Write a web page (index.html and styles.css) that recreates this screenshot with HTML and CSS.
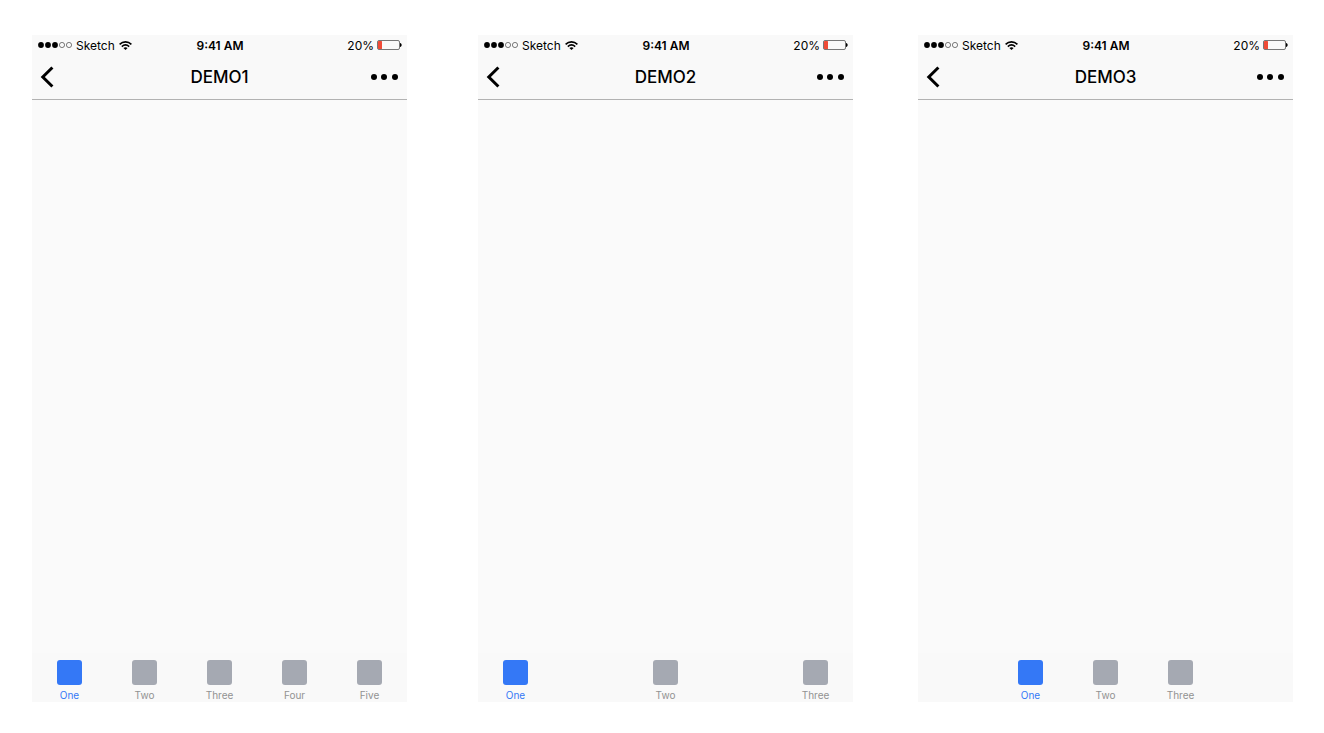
FILE: index.html
```html
<!DOCTYPE html>
<html lang="en">
<head>
  <meta charset="UTF-8" />
  <meta name="viewport" content="width=device-width, initial-scale=1.0">
  <title>Tab bar demos</title>
  <link rel="stylesheet" href="styles.css">
</head>
<body>
  <!-- shared icons -->
  <svg class="sprite" aria-hidden="true">
    <symbol id="signal" viewBox="0 0 34 6">
      <circle cx="3" cy="3" r="2.9" />
      <circle cx="10" cy="3" r="2.9" />
      <circle cx="17" cy="3" r="2.9" />
      <circle cx="24" cy="3" r="2.6" fill="none" stroke="#000" stroke-width=".5" />
      <circle cx="31" cy="3" r="2.6" fill="none" stroke="#000" stroke-width=".5" />
    </symbol>
    <symbol id="wifi" viewBox="0 0 13 9">
      <g fill="none" stroke="#000" stroke-width="1.6">
        <path d="M.6 3.3C4 .1 9 .1 12.4 3.3" />
        <path d="M2.8 5.6C5 3.6 8 3.6 10.2 5.6" />
      </g>
      <path d="M4.4 7.1C5.7 6 7.3 6 8.6 7.1L6.5 9z" />
    </symbol>
    <symbol id="battery" viewBox="0 0 25 10">
      <rect x=".5" y=".5" width="22" height="9" rx="1.5" fill="none" stroke="#555" stroke-width=".8" />
      <rect x="1" y="1" width="4" height="8" rx=".5" fill="#f04b37" />
      <path d="M23 3c2.2.4 2.2 3.6 0 4z" />
    </symbol>
    <symbol id="back" viewBox="0 0 14 22">
      <path d="M12.4 1.5L2.8 11L12.4 20.5" fill="none" stroke="#000" stroke-width="3" />
    </symbol>
    <symbol id="more" viewBox="0 0 28 6">
      <circle cx="3" cy="3" r="3" />
      <circle cx="13" cy="3" r="3" />
      <circle cx="24" cy="3" r="3" />
    </symbol>
  </svg>

  <main class="demos">
    <section class="phone">
      <header>
        <div class="status-bar">
          <div class="carrier">
            <svg class="signal"><use href="#signal" /></svg>
            <span>Sketch</span>
            <svg class="wifi"><use href="#wifi" /></svg>
          </div>
          <div class="time">9:41 AM</div>
          <div class="power">
            <span>20%</span>
            <svg class="battery"><use href="#battery" /></svg>
          </div>
        </div>
        <div class="nav-bar">
          <button class="back" aria-label="Back"><svg><use href="#back" /></svg></button>
          <h1>DEMO1</h1>
          <button class="more" aria-label="More"><svg><use href="#more" /></svg></button>
        </div>
      </header>
      <div class="content"></div>
      <nav class="tab-bar">
        <button class="tab active">One</button>
        <button class="tab">Two</button>
        <button class="tab">Three</button>
        <button class="tab">Four</button>
        <button class="tab">Five</button>
      </nav>
    </section>

    <section class="phone">
      <header>
        <div class="status-bar">
          <div class="carrier">
            <svg class="signal"><use href="#signal" /></svg>
            <span>Sketch</span>
            <svg class="wifi"><use href="#wifi" /></svg>
          </div>
          <div class="time">9:41 AM</div>
          <div class="power">
            <span>20%</span>
            <svg class="battery"><use href="#battery" /></svg>
          </div>
        </div>
        <div class="nav-bar">
          <button class="back" aria-label="Back"><svg><use href="#back" /></svg></button>
          <h1>DEMO2</h1>
          <button class="more" aria-label="More"><svg><use href="#more" /></svg></button>
        </div>
      </header>
      <div class="content"></div>
      <nav class="tab-bar spread">
        <button class="tab active">One</button>
        <button class="tab">Two</button>
        <button class="tab">Three</button>
      </nav>
    </section>

    <section class="phone">
      <header>
        <div class="status-bar">
          <div class="carrier">
            <svg class="signal"><use href="#signal" /></svg>
            <span>Sketch</span>
            <svg class="wifi"><use href="#wifi" /></svg>
          </div>
          <div class="time">9:41 AM</div>
          <div class="power">
            <span>20%</span>
            <svg class="battery"><use href="#battery" /></svg>
          </div>
        </div>
        <div class="nav-bar">
          <button class="back" aria-label="Back"><svg><use href="#back" /></svg></button>
          <h1>DEMO3</h1>
          <button class="more" aria-label="More"><svg><use href="#more" /></svg></button>
        </div>
      </header>
      <div class="content"></div>
      <nav class="tab-bar">
        <button class="tab active">One</button>
        <button class="tab">Two</button>
        <button class="tab">Three</button>
      </nav>
    </section>
  </main>
</body>
</html>
```

FILE: styles.css
```css
:root {
  --blue: #3478f6;
  --grey: #a5a9b2;
  --bar: #f9f9f9;
}

* {
  box-sizing: border-box;
}

body {
  margin: 0;
  background: #ffffff;
  color: #000000;
  font-family: Inter, Roboto, sans-serif;
}

.sprite {
  display: none;
}

svg {
  display: block;
}

button {
  border: none;
  background: none;
  padding: 0;
  font-family: inherit;
  cursor: pointer;
}

.demos {
  display: flex;
  align-items: flex-start;
  gap: 65px;
  padding: 35px 31px 31px 32px;
}

.phone {
  flex: 1 1 0;
  min-width: 0;
  aspect-ratio: 375 / 667;
  display: flex;
  flex-direction: column;
  background: #fafafa;
}

.phone:first-child {
  margin-right: 6px;
}

header {
  background: var(--bar);
  border-bottom: 1px solid #b2b2b2;
}

/* Status bar */
.status-bar {
  display: grid;
  grid-template-columns: 1fr auto 1fr;
  align-items: center;
  height: 20px;
  padding: 0 5px 0 6px;
  font-size: 12px;
  line-height: 18px;
}

.status-bar span,
.time {
  padding-top: 2px;
}

.carrier,
.power {
  display: flex;
  align-items: center;
  gap: 4px;
}

.power {
  justify-content: flex-end;
  gap: 3px;
}

.time {
  font-weight: 600;
}

.signal {
  width: 34px;
  height: 6px;
}

.wifi {
  width: 13px;
  height: 9px;
}

.battery {
  width: 25px;
  height: 10px;
}

/* Navigation bar */
.nav-bar {
  display: grid;
  grid-template-columns: 1fr auto 1fr;
  align-items: center;
  height: 44px;
  padding: 0 8px;
}

.nav-bar h1 {
  margin: 0;
  font-size: 17px;
  line-height: 24px;
  font-weight: 500;
}

.back svg {
  width: 14px;
  height: 22px;
}

.more {
  justify-self: end;
}

.more svg {
  width: 28px;
  height: 6px;
}

.content {
  flex: 1;
}

/* Tab bar */
.tab-bar {
  display: flex;
  justify-content: center;
  height: 49px;
  background: var(--bar);
}

.tab-bar.spread {
  justify-content: space-between;
}

.tab {
  display: flex;
  flex-direction: column;
  align-items: center;
  gap: 4px;
  width: 20%;
  padding-top: 7px;
  font-size: 10px;
  line-height: 12px;
  color: #929292;
}

.tab::before {
  content: "";
  width: 25px;
  height: 25px;
  border-radius: 3px;
  background: var(--grey);
}

.tab.active {
  color: var(--blue);
}

.tab.active::before {
  background: var(--blue);
}
```
